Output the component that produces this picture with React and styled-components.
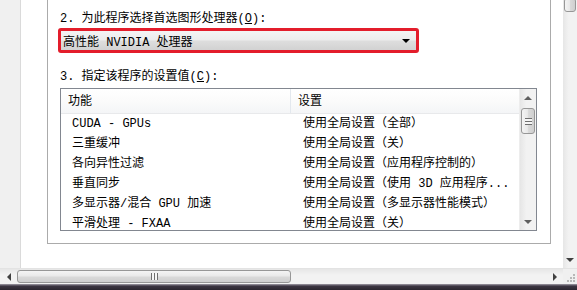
import React from "react";
import styled, { createGlobalStyle, css } from "styled-components";

const GlobalStyle = createGlobalStyle`
  html, body {
    margin: 0;
    padding: 0;
    background: #ffffff;
  }
  body {
    font-family: "Liberation Mono", "Noto Sans CJK SC", monospace;
    font-size: 12px;
    color: #000;
  }
`;

const Frame = styled.div`
  width: 577px;
  height: 290px;
  overflow: hidden;
  display: grid;
  grid-template-columns: 563px 14px;
  grid-template-rows: 268px 16px 6px;
`;

const Content = styled.div`
  display: flex;
  overflow: hidden;
  background: #fff;
`;

const SidePane = styled.div`
  width: 20px;
  flex-shrink: 0;
  background: #f0f0f0;
  border-right: 1px solid #dadada;
`;

const Main = styled.div`
  flex: 1;
  padding-left: 26px;
`;

const GroupBox = styled.div`
  box-sizing: border-box;
  width: 504px;
  height: 244px;
  border: 1px solid #ababab;
  border-top: none;
  padding: 11px 0 0 12px;
`;

const Label = styled.div`
  height: 16px;
  line-height: 16px;
  white-space: nowrap;
  margin-top: ${(p) => p.$top || 0}px;
  u {
    text-decoration: underline;
  }
`;

const Select = styled.div`
  box-sizing: border-box;
  margin: 1px 0 0 -2px;
  width: 361px;
  height: 25px;
  border: 3px solid #e31d2b;
  border-radius: 3px;
  background: linear-gradient(#f4f4f4, #ececec 48%, #dedede 52%, #d2d2d2);
  display: flex;
  align-items: center;
  justify-content: space-between;
  padding: 0 6px 0 2px;
  white-space: nowrap;
`;

const arrowShapes = {
  down: css`
    border-left: 4px solid transparent;
    border-right: 4px solid transparent;
    border-top: 4px solid ${(p) => p.$color};
  `,
  up: css`
    border-left: 4px solid transparent;
    border-right: 4px solid transparent;
    border-bottom: 4px solid ${(p) => p.$color};
  `,
  left: css`
    border-top: 4px solid transparent;
    border-bottom: 4px solid transparent;
    border-right: 4px solid ${(p) => p.$color};
  `,
  right: css`
    border-top: 4px solid transparent;
    border-bottom: 4px solid transparent;
    border-left: 4px solid ${(p) => p.$color};
  `,
};

const Arrow = styled.span`
  width: 0;
  height: 0;
  display: block;
  ${(p) => arrowShapes[p.$dir]}
`;

const ListView = styled.div`
  box-sizing: border-box;
  margin-top: 3px;
  width: 477px;
  height: 143px;
  border: 1px solid #828790;
  display: grid;
  grid-template-columns: 1fr 17px;
  overflow: hidden;
`;

const Table = styled.div`
  overflow: hidden;
`;

const HeaderRow = styled.div`
  display: grid;
  grid-template-columns: 230px 1fr;
  height: 25px;
  background: linear-gradient(#ffffff, #fbfbfb 50%, #f4f5f7);
  border-bottom: 1px solid #e8e9eb;
  box-sizing: border-box;
`;

const HeaderCell = styled.div`
  padding: 5px 0 0 7px;
  line-height: 16px;
  border-right: ${(p) => (p.$divider ? "1px solid #e3e8ee" : "none")};
  white-space: nowrap;
`;

const Row = styled.div`
  display: grid;
  grid-template-columns: 230px 1fr;
  height: 20px;
  line-height: 20px;
  white-space: nowrap;
`;

const Cell = styled.div`
  padding-left: ${(p) => p.$pad}px;
  overflow: hidden;
`;

const VTrack = styled.div`
  display: flex;
  flex-direction: column;
  background: linear-gradient(90deg, #e6e6e6, #f2f2f2 40%, #f2f2f2);
  border-left: ${(p) => (p.$edge ? "1px solid #ededed" : "none")};
  overflow: hidden;
`;

const HTrack = styled.div`
  display: flex;
  align-items: stretch;
  background: linear-gradient(#e6e6e6, #f2f2f2 40%, #f2f2f2);
  border-top: 1px solid #e3e3e3;
`;

const ArrowBox = styled.div`
  flex: 0 0 ${(p) => p.$size || 17}px;
  display: flex;
  align-items: center;
  justify-content: center;
`;

const Thumb = styled.div`
  box-sizing: border-box;
  border: 1px solid #979797;
  border-radius: 3px;
  display: flex;
  align-items: center;
  justify-content: center;
  ${(p) =>
    p.$horizontal
      ? css`
          width: ${p.$length}px;
          margin: 1px 0;
          background: linear-gradient(#f4f4f4, #e9e9e9 45%, #d9d9d9 55%, #cfcfcf);
        `
      : css`
          height: ${p.$length}px;
          margin: ${p.$offset || 0}px 1px 0;
          background: linear-gradient(90deg, #f4f4f4, #e9e9e9 45%, #d9d9d9 55%, #cfcfcf);
        `}
`;

const Grip = styled.span`
  display: block;
  width: 7px;
  height: 7px;
  background: repeating-linear-gradient(
    ${(p) => (p.$horizontal ? "90deg" : "180deg")},
    #6f6f6f 0 1px,
    #f6f6f6 1px 3px
  );
`;

const Spacer = styled.div`
  flex: 1;
`;

const Corner = styled.div`
  background: #f0f0f0;
  border-top: 1px solid #e3e3e3;
  display: flex;
  align-items: flex-end;
  justify-content: flex-end;
  padding: 0 2px 2px 0;
`;

const Dots = styled.svg`
  display: block;
`;

const Taskbar = styled.div`
  grid-column: 1 / 3;
  background: linear-gradient(#6a6470, #3a3440 30%, #2b2630);
  border-top: 1px solid #8a8590;
`;

const rows = [
  ["CUDA - GPUs", "使用全局设置（全部）"],
  ["三重缓冲", "使用全局设置（关）"],
  ["各向异性过滤", "使用全局设置（应用程序控制的）"],
  ["垂直同步", "使用全局设置（使用 3D 应用程序..."],
  ["多显示器/混合 GPU 加速", "使用全局设置（多显示器性能模式）"],
  ["平滑处理 - FXAA", "使用全局设置（关）"],
];

const gripDots = [
  [8, 0],
  [8, 3],
  [5, 3],
  [8, 6],
  [5, 6],
  [2, 6],
];

export default function App() {
  return (
    <>
      <GlobalStyle />
      <Frame>
        <Content>
          <SidePane />
          <Main>
            <GroupBox>
              <Label>
                2. 为此程序选择首选图形处理器(<u>O</u>):
              </Label>
              <Select>
                <span>高性能 NVIDIA 处理器</span>
                <Arrow $dir="down" $color="#000" />
              </Select>
              <Label $top={16}>
                3. 指定该程序的设置值(<u>C</u>):
              </Label>
              <ListView>
                <Table>
                  <HeaderRow>
                    <HeaderCell $divider>功能</HeaderCell>
                    <HeaderCell>设置</HeaderCell>
                  </HeaderRow>
                  {rows.map(([feature, setting]) => (
                    <Row key={feature}>
                      <Cell $pad={11}>{feature}</Cell>
                      <Cell $pad={12}>{setting}</Cell>
                    </Row>
                  ))}
                </Table>
                <VTrack $edge>
                  <ArrowBox>
                    <Arrow $dir="up" $color="#606060" />
                  </ArrowBox>
                  <Thumb $length={26} $offset={2}>
                    <Grip />
                  </Thumb>
                  <Spacer />
                  <ArrowBox>
                    <Arrow $dir="down" $color="#606060" />
                  </ArrowBox>
                </VTrack>
              </ListView>
            </GroupBox>
          </Main>
        </Content>
        <VTrack>
          <Thumb $length={14} $offset={-2} />
          <Spacer />
          <ArrowBox>
            <Arrow $dir="down" $color="#404040" />
          </ArrowBox>
        </VTrack>
        <HTrack>
          <ArrowBox>
            <Arrow $dir="left" $color="#404040" />
          </ArrowBox>
          <Thumb $horizontal $length={274}>
            <Grip $horizontal />
          </Thumb>
          <Spacer />
          <ArrowBox>
            <Arrow $dir="right" $color="#404040" />
          </ArrowBox>
        </HTrack>
        <Corner>
          <Dots width="10" height="10" viewBox="0 0 10 10">
            {gripDots.map(([x, y]) => (
              <rect key={`${x}-${y}`} x={x} y={y + 2} width="2" height="2" fill="#b8b8b8" />
            ))}
          </Dots>
        </Corner>
        <Taskbar />
      </Frame>
    </>
  );
}
